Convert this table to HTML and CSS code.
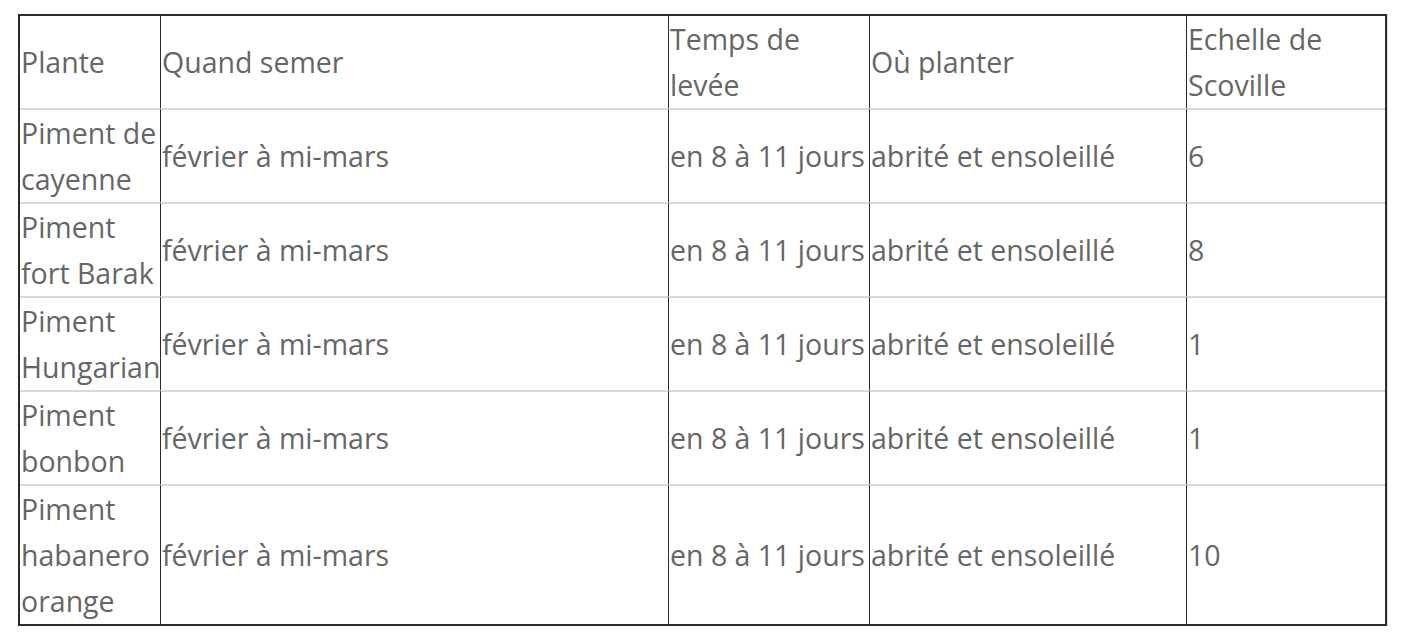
FILE: index.html
```html
<!DOCTYPE html>
<html lang="fr">
<head>
<meta charset="utf-8">
<title>Piments</title>
<link rel="stylesheet" href="styles.css">
</head>
<body>
<table class="plants">
  <colgroup>
    <col class="c1"><col class="c2"><col class="c3"><col class="c4"><col class="c5">
  </colgroup>
  <tr>
    <td>Plante</td>
    <td>Quand semer</td>
    <td>Temps de levée</td>
    <td>Où planter</td>
    <td>Echelle de Scoville</td>
  </tr>
  <tr>
    <td>Piment de cayenne</td>
    <td>février à mi-mars</td>
    <td>en 8 à 11 jours</td>
    <td>abrité et ensoleillé</td>
    <td>6</td>
  </tr>
  <tr>
    <td>Piment fort Barak</td>
    <td>février à mi-mars</td>
    <td>en 8 à 11 jours</td>
    <td>abrité et ensoleillé</td>
    <td>8</td>
  </tr>
  <tr>
    <td>Piment Hungarian</td>
    <td>février à mi-mars</td>
    <td>en 8 à 11 jours</td>
    <td>abrité et ensoleillé</td>
    <td>1</td>
  </tr>
  <tr>
    <td>Piment bonbon</td>
    <td>février à mi-mars</td>
    <td>en 8 à 11 jours</td>
    <td>abrité et ensoleillé</td>
    <td>1</td>
  </tr>
  <tr>
    <td>Piment habanero orange</td>
    <td>février à mi-mars</td>
    <td>en 8 à 11 jours</td>
    <td>abrité et ensoleillé</td>
    <td>10</td>
  </tr>
</table>
</body>
</html>
```
FILE: styles.css
```css
html, body {
  margin: 0;
  padding: 0;
  background: #ffffff;
}
body {
  padding: 14px 0 0 18px;
  font-family: "Open Sans", "Noto Sans", sans-serif;
}
.plants {
  border-collapse: separate;
  border-spacing: 0;
  table-layout: fixed;
  width: 1369px;
  box-sizing: border-box;
  border: 2px solid #2b2b2b;
  box-shadow: 1px 0 0 #dddddd;
  font-size: 28.5px;
  line-height: 46px;
  color: #666666;
}
.c1 { width: 140px; }
.c2 { width: 508px; }
.c3 { width: 201px; }
.c4 { width: 317px; }
.c5 { width: 199px; }
.plants td {
  box-sizing: border-box;
  padding: 0 0 0 1px;
  vertical-align: middle;
  text-align: left;
  border-left: 1px solid #2b2b2b;
}
.plants td:first-child {
  border-left: 0;
}
.plants tr + tr td {
  border-top: 2px solid #d9d9d9;
}
```
